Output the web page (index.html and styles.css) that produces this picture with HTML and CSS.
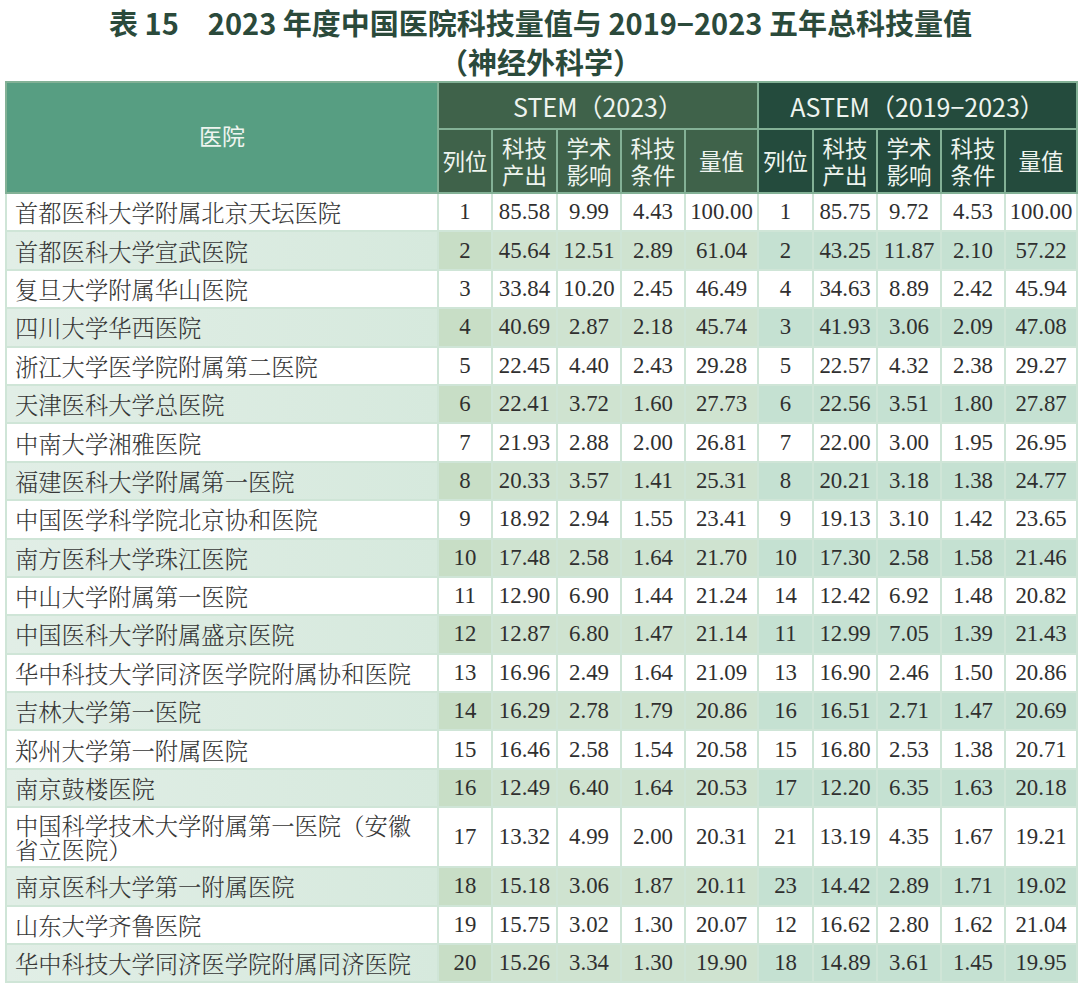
FILE: index.html
```html
<!DOCTYPE html>
<html lang="zh-CN">
<head>
<meta charset="utf-8">
<title>表 15</title>
<link rel="stylesheet" href="styles.css">
</head>
<body>
<div class="page">
  <h1 class="title">
    <span class="line">表 15　2023 年度中国医院科技量值与 2019−2023 五年总科技量值</span>
    <span class="line">（神经外科学）</span>
  </h1>
  <table class="grid">
    <colgroup>
      <col class="w-name">
      <col class="w-rank"><col class="w-65"><col class="w-64"><col class="w-64"><col class="w-val">
      <col class="w-rank2"><col class="w-64"><col class="w-64"><col class="w-64"><col class="w-val2">
    </colgroup>
    <thead>
      <tr class="h1">
        <th class="hn" rowspan="2">医院</th>
        <th class="hs" colspan="5">STEM（2023）</th>
        <th class="ha" colspan="5">ASTEM（2019−2023）</th>
      </tr>
      <tr class="h2">
        <th class="hs">列位</th><th class="hs">科技<br>产出</th><th class="hs">学术<br>影响</th><th class="hs">科技<br>条件</th><th class="hs">量值</th>
        <th class="ha">列位</th><th class="ha">科技<br>产出</th><th class="ha">学术<br>影响</th><th class="ha">科技<br>条件</th><th class="ha">量值</th>
      </tr>
    </thead>
    <tbody>
      <tr><td class="n">首都医科大学附属北京天坛医院</td><td>1</td><td>85.58</td><td>9.99</td><td>4.43</td><td>100.00</td><td>1</td><td>85.75</td><td>9.72</td><td>4.53</td><td>100.00</td></tr>
      <tr class="alt"><td class="n">首都医科大学宣武医院</td><td class="sr">2</td><td class="s">45.64</td><td class="s">12.51</td><td class="s">2.89</td><td class="s">61.04</td><td class="a">2</td><td class="a">43.25</td><td class="a">11.87</td><td class="a">2.10</td><td class="a">57.22</td></tr>
      <tr><td class="n">复旦大学附属华山医院</td><td>3</td><td>33.84</td><td>10.20</td><td>2.45</td><td>46.49</td><td>4</td><td>34.63</td><td>8.89</td><td>2.42</td><td>45.94</td></tr>
      <tr class="alt"><td class="n">四川大学华西医院</td><td class="sr">4</td><td class="s">40.69</td><td class="s">2.87</td><td class="s">2.18</td><td class="s">45.74</td><td class="a">3</td><td class="a">41.93</td><td class="a">3.06</td><td class="a">2.09</td><td class="a">47.08</td></tr>
      <tr><td class="n">浙江大学医学院附属第二医院</td><td>5</td><td>22.45</td><td>4.40</td><td>2.43</td><td>29.28</td><td>5</td><td>22.57</td><td>4.32</td><td>2.38</td><td>29.27</td></tr>
      <tr class="alt"><td class="n">天津医科大学总医院</td><td class="sr">6</td><td class="s">22.41</td><td class="s">3.72</td><td class="s">1.60</td><td class="s">27.73</td><td class="a">6</td><td class="a">22.56</td><td class="a">3.51</td><td class="a">1.80</td><td class="a">27.87</td></tr>
      <tr><td class="n">中南大学湘雅医院</td><td>7</td><td>21.93</td><td>2.88</td><td>2.00</td><td>26.81</td><td>7</td><td>22.00</td><td>3.00</td><td>1.95</td><td>26.95</td></tr>
      <tr class="alt"><td class="n">福建医科大学附属第一医院</td><td class="sr">8</td><td class="s">20.33</td><td class="s">3.57</td><td class="s">1.41</td><td class="s">25.31</td><td class="a">8</td><td class="a">20.21</td><td class="a">3.18</td><td class="a">1.38</td><td class="a">24.77</td></tr>
      <tr><td class="n">中国医学科学院北京协和医院</td><td>9</td><td>18.92</td><td>2.94</td><td>1.55</td><td>23.41</td><td>9</td><td>19.13</td><td>3.10</td><td>1.42</td><td>23.65</td></tr>
      <tr class="alt"><td class="n">南方医科大学珠江医院</td><td class="sr">10</td><td class="s">17.48</td><td class="s">2.58</td><td class="s">1.64</td><td class="s">21.70</td><td class="a">10</td><td class="a">17.30</td><td class="a">2.58</td><td class="a">1.58</td><td class="a">21.46</td></tr>
      <tr><td class="n">中山大学附属第一医院</td><td>11</td><td>12.90</td><td>6.90</td><td>1.44</td><td>21.24</td><td>14</td><td>12.42</td><td>6.92</td><td>1.48</td><td>20.82</td></tr>
      <tr class="alt"><td class="n">中国医科大学附属盛京医院</td><td class="sr">12</td><td class="s">12.87</td><td class="s">6.80</td><td class="s">1.47</td><td class="s">21.14</td><td class="a">11</td><td class="a">12.99</td><td class="a">7.05</td><td class="a">1.39</td><td class="a">21.43</td></tr>
      <tr><td class="n">华中科技大学同济医学院附属协和医院</td><td>13</td><td>16.96</td><td>2.49</td><td>1.64</td><td>21.09</td><td>13</td><td>16.90</td><td>2.46</td><td>1.50</td><td>20.86</td></tr>
      <tr class="alt"><td class="n">吉林大学第一医院</td><td class="sr">14</td><td class="s">16.29</td><td class="s">2.78</td><td class="s">1.79</td><td class="s">20.86</td><td class="a">16</td><td class="a">16.51</td><td class="a">2.71</td><td class="a">1.47</td><td class="a">20.69</td></tr>
      <tr><td class="n">郑州大学第一附属医院</td><td>15</td><td>16.46</td><td>2.58</td><td>1.54</td><td>20.58</td><td>15</td><td>16.80</td><td>2.53</td><td>1.38</td><td>20.71</td></tr>
      <tr class="alt"><td class="n">南京鼓楼医院</td><td class="sr">16</td><td class="s">12.49</td><td class="s">6.40</td><td class="s">1.64</td><td class="s">20.53</td><td class="a">17</td><td class="a">12.20</td><td class="a">6.35</td><td class="a">1.63</td><td class="a">20.18</td></tr>
      <tr class="tall"><td class="n">中国科学技术大学附属第一医院（安徽省立医院）</td><td>17</td><td>13.32</td><td>4.99</td><td>2.00</td><td>20.31</td><td>21</td><td>13.19</td><td>4.35</td><td>1.67</td><td>19.21</td></tr>
      <tr class="alt"><td class="n">南京医科大学第一附属医院</td><td class="sr">18</td><td class="s">15.18</td><td class="s">3.06</td><td class="s">1.87</td><td class="s">20.11</td><td class="a">23</td><td class="a">14.42</td><td class="a">2.89</td><td class="a">1.71</td><td class="a">19.02</td></tr>
      <tr><td class="n">山东大学齐鲁医院</td><td>19</td><td>15.75</td><td>3.02</td><td>1.30</td><td>20.07</td><td>12</td><td>16.62</td><td>2.80</td><td>1.62</td><td>21.04</td></tr>
      <tr class="alt"><td class="n">华中科技大学同济医学院附属同济医院</td><td class="sr">20</td><td class="s">15.26</td><td class="s">3.34</td><td class="s">1.30</td><td class="s">19.90</td><td class="a">18</td><td class="a">14.89</td><td class="a">3.61</td><td class="a">1.45</td><td class="a">19.95</td></tr>
    </tbody>
  </table>
</div>
</body>
</html>
```

FILE: styles.css
```css
html, body {
  margin: 0;
  padding: 0;
  background: #ffffff;
}

.page {
  width: 1080px;
  padding: 0 0 0 5px;
  box-sizing: border-box;
}

.title {
  margin: 0;
  padding-top: 3px;
  width: 1071px;
  text-align: center;
  font-family: "Noto Sans CJK SC", "Noto Sans", sans-serif;
  font-weight: 700;
  font-size: 29px;
  line-height: 39px;
  color: #2b4a3b;
}

.title .line {
  display: block;
}

.grid {
  border-collapse: collapse;
  table-layout: fixed;
  width: 1071px;
}

.w-name { width: 432px; }
.w-rank { width: 54px; }
.w-65 { width: 65px; }
.w-64 { width: 64px; }
.w-val { width: 73px; }
.w-rank2 { width: 55px; }
.w-val2 { width: 72px; }

.grid th {
  font-family: "Noto Sans CJK SC", "Noto Sans", sans-serif;
  font-weight: 400;
  color: #eef4ef;
  border: 2px solid #83b196;
  padding: 0;
  text-align: center;
  vertical-align: middle;
}

.h1 {
  height: 47px;
}

.h1 th {
  font-size: 25px;
  line-height: 30px;
}

.h1 th.hn {
  font-size: 23px;
  padding-bottom: 6px;
}

.h2 {
  height: 64px;
}

.h2 th {
  font-size: 22.5px;
  line-height: 27.5px;
}

.hn { background: #579e82; }
.hs { background: #3f624a; }
.ha { background: #244b3d; }

.grid td {
  border: 2px solid #cfe5d7;
  padding: 0;
  text-align: center;
  vertical-align: middle;
  font-family: "Liberation Serif", "Times New Roman", serif;
  font-size: 22.8px;
  line-height: 26px;
  color: #2f2f2f;
  white-space: nowrap;
}

.grid td.n {
  text-align: left;
  padding: 0 12px 0 8px;
  font-family: "Noto Serif CJK SC", "Noto Sans CJK SC", serif;
  font-weight: 300;
  font-size: 23.3px;
  line-height: 24px;
  color: #363636;
  white-space: normal;
}

.grid tbody tr {
  height: 38.4px;
}

.grid tbody tr.tall {
  height: 60px;
}

.alt td.n { background: linear-gradient(90deg, #e1eee6, #d6e9dd); }
.alt td.sr { background: #c8dec6; }
.alt td.s { background: #cfe3d0; }
.alt td.a { background: #c5e1d2; }
```
